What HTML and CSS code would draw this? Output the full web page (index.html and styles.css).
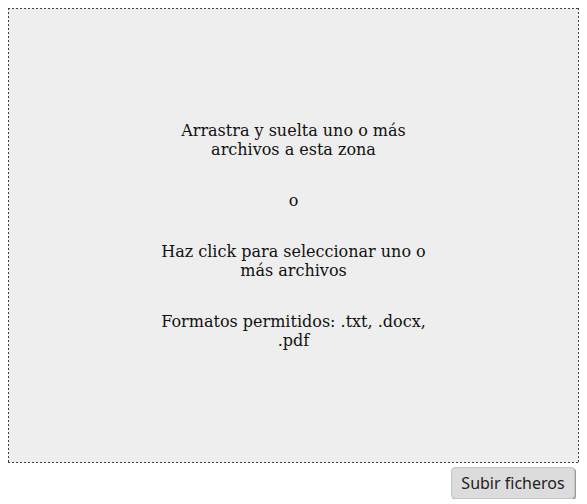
FILE: index.html
```html
<!DOCTYPE html>
<html lang="es">
<head>
<meta charset="utf-8">
<link rel="stylesheet" href="styles.css">
</head>
<body>
<div class="dropzone">
  <div class="msg">
    <p>Arrastra y suelta uno o más archivos a esta zona</p>
    <p>o</p>
    <p>Haz click para seleccionar uno o más archivos</p>
    <p>Formatos permitidos: .txt, .docx, .pdf</p>
  </div>
</div>
<div class="actions">
  <button class="upload">Subir ficheros</button>
</div>
</body>
</html>
```
FILE: styles.css
```css
body {
  margin: 8px;
  background: #fff;
  font-family: "DejaVu Serif", serif;
}
.dropzone {
  height: 455px;
  box-sizing: border-box;
  background:
    repeating-linear-gradient(to right, #444 0 2px, transparent 2px 4px) top left / 100% 1px no-repeat,
    repeating-linear-gradient(to right, #444 0 2px, transparent 2px 4px) bottom left / 100% 1px no-repeat,
    repeating-linear-gradient(to bottom, #444 0 2px, transparent 2px 4px) top left / 1px 100% no-repeat,
    repeating-linear-gradient(to bottom, #444 0 2px, transparent 2px 4px) top right / 1px 100% no-repeat,
    #eeeeee;
  display: flex;
  align-items: center;
  justify-content: center;
}
.msg {
  width: 50%;
  text-align: center;
  font-size: 16px;
  line-height: 19px;
  color: #111;
}
.msg p {
  margin: 32px 0;
}
.msg p:first-child { margin-top: 0; }
.msg p:last-child { margin-bottom: 0; }
.actions {
  display: flex;
  justify-content: flex-end;
  padding: 4px 4px 0 0;
}
.upload {
  width: 124px;
  height: 32px;
  font-family: "Noto Sans", sans-serif;
  font-size: 16px;
  color: #222;
  background: #dcdcdc;
  border: 1px solid #c4c4c4;
  border-radius: 4px;
  box-shadow: 1px 1px 0 #9a9a9a;
  padding: 0;
}
```
